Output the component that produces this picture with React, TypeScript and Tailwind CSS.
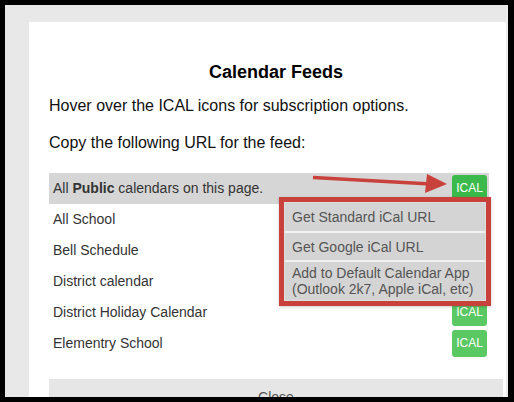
import React from "react";

const rows = ["All School", "Bell Schedule", "District calendar", "District Holiday Calendar", "Elementry School"];

function Ical({ dark }: { dark?: boolean }) {
  return (
    <div
      className={
        "w-[35px] h-[27px] rounded-[3px] flex items-center justify-center text-white text-[12px] leading-[14px] pb-[2px] " +
        (dark ? "bg-[#3cb94b]" : "bg-[#5ac863]")
      }
    >
      ICAL
    </div>
  );
}

export default function App() {
  return (
    <div className="w-[514px] h-[402px] bg-black pt-[5px] pl-[5px] pr-[6px] pb-[5px] font-['Liberation_Sans',Arial,sans-serif]">
      <div className="flex h-full bg-[#e8e8e8] overflow-hidden">
        <div className="flex-1 overflow-hidden pt-[17px] pl-[24px]">
          <div className="w-[494px] h-[400px] bg-white px-[20px] pt-[39px]">
            <div className="text-center text-[18px] leading-[22px] font-bold text-black">Calendar Feeds</div>
            <div className="mt-[13px] text-[16px] leading-[20px] text-[#111]">
              Hover over the ICAL icons for subscription options.
            </div>
            <div className="mt-[17px] text-[16px] leading-[20px] text-[#111]">Copy the following URL for the feed:</div>
            <div className="relative mt-[20px] w-[440px] text-[14px] text-[#333]">
              <div className="h-[31px] bg-[#d6d6d6] flex items-center justify-between pl-[4px] pr-[2px]">
                <span>
                  All <b>Public</b> calendars on this page.
                </span>
                <Ical dark />
              </div>
              {rows.map((r) => (
                <div key={r} className="h-[31px] flex items-center justify-between pl-[4px] pr-[2px]">
                  <span>{r}</span>
                  <Ical />
                </div>
              ))}
              <svg className="absolute left-0 top-0 overflow-visible" width="440" height="31" viewBox="0 0 440 31">
                <line x1="264" y1="4.5" x2="382" y2="11" stroke="#c9413b" strokeWidth="3.5" />
                <polygon points="378,1 376,20 398,11" fill="#c9413b" />
              </svg>
              <div className="absolute top-[24px] left-[230px] w-[212px] border-[5px] border-[#c9413b] bg-[#dedede] p-px text-[#555] text-[14px] leading-[16px] shadow-[0_1px_3px_rgba(0,0,0,0.2)]">
                <div className="h-[28px] bg-[#d4d4d4] pl-[7px] flex items-center">Get Standard iCal URL</div>
                <div className="h-[2px] bg-[#f2f2f2]" />
                <div className="h-[27px] bg-[#d4d4d4] pl-[7px] flex items-center">Get Google iCal URL</div>
                <div className="h-[2px] bg-[#f2f2f2]" />
                <div className="h-[38px] bg-[#d4d4d4] pl-[7px] pt-[3px]">
                  Add to Default Calendar App
                  <br />
                  (Outlook 2k7, Apple iCal, etc)
                </div>
              </div>
            </div>
            <div className="mt-[20px] h-[40px] bg-[#e6e6e6] text-center text-[14px] leading-[16px] pt-[10px] text-[#555]">
              Close
            </div>
          </div>
        </div>
        <div className="w-[2px] bg-[#ececec]" />
      </div>
    </div>
  );
}
